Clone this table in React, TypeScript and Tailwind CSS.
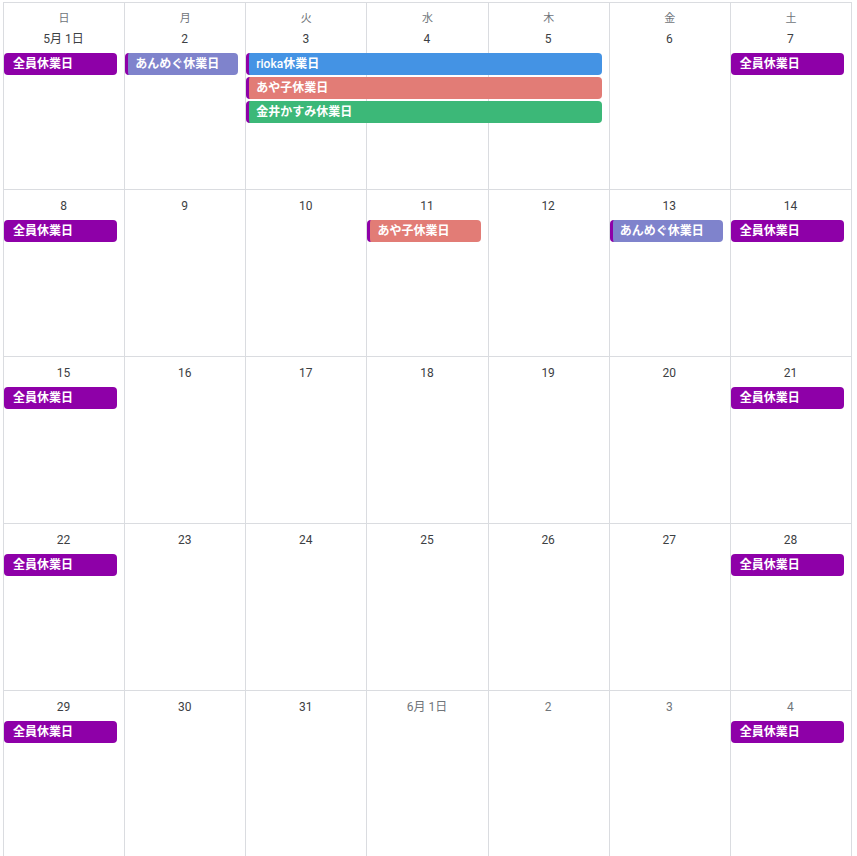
import React from "react";

type Ev = {
  col: number;
  span: number;
  row: number;
  label: string;
  color: string;
  stripe?: boolean;
};

const colStart = ["col-start-1", "col-start-2", "col-start-3", "col-start-4", "col-start-5", "col-start-6", "col-start-7"];
const colSpan: Record<number, string> = { 1: "col-span-1", 3: "col-span-3" };
const rowStart = ["row-start-2", "row-start-3", "row-start-4"];

const days = ["日", "月", "火", "水", "木", "金", "土"];

const ALL = "全員休業日";

const weeks: { dates: { label: string; muted?: boolean }[]; events: Ev[] }[] = [
  {
    dates: ["5月 1日", "2", "3", "4", "5", "6", "7"].map((label) => ({ label })),
    events: [
      { col: 1, span: 1, row: 0, label: ALL, color: "bg-[#8e00a8]" },
      { col: 2, span: 1, row: 0, label: "あんめぐ休業日", color: "bg-[#7f83cc]", stripe: true },
      { col: 3, span: 3, row: 0, label: "rioka休業日", color: "bg-[#4493e4]", stripe: true },
      { col: 3, span: 3, row: 1, label: "あや子休業日", color: "bg-[#e27c76]", stripe: true },
      { col: 3, span: 3, row: 2, label: "金井かすみ休業日", color: "bg-[#3cb878]", stripe: true },
      { col: 7, span: 1, row: 0, label: ALL, color: "bg-[#8e00a8]" },
    ],
  },
  {
    dates: ["8", "9", "10", "11", "12", "13", "14"].map((label) => ({ label })),
    events: [
      { col: 1, span: 1, row: 0, label: ALL, color: "bg-[#8e00a8]" },
      { col: 4, span: 1, row: 0, label: "あや子休業日", color: "bg-[#e27c76]", stripe: true },
      { col: 6, span: 1, row: 0, label: "あんめぐ休業日", color: "bg-[#7f83cc]", stripe: true },
      { col: 7, span: 1, row: 0, label: ALL, color: "bg-[#8e00a8]" },
    ],
  },
  {
    dates: ["15", "16", "17", "18", "19", "20", "21"].map((label) => ({ label })),
    events: [
      { col: 1, span: 1, row: 0, label: ALL, color: "bg-[#8e00a8]" },
      { col: 7, span: 1, row: 0, label: ALL, color: "bg-[#8e00a8]" },
    ],
  },
  {
    dates: ["22", "23", "24", "25", "26", "27", "28"].map((label) => ({ label })),
    events: [
      { col: 1, span: 1, row: 0, label: ALL, color: "bg-[#8e00a8]" },
      { col: 7, span: 1, row: 0, label: ALL, color: "bg-[#8e00a8]" },
    ],
  },
  {
    dates: [
      { label: "29" },
      { label: "30" },
      { label: "31" },
      { label: "6月 1日", muted: true },
      { label: "2", muted: true },
      { label: "3", muted: true },
      { label: "4", muted: true },
    ],
    events: [
      { col: 1, span: 1, row: 0, label: ALL, color: "bg-[#8e00a8]" },
      { col: 7, span: 1, row: 0, label: ALL, color: "bg-[#8e00a8]" },
    ],
  },
];

// latin part of a title reads lighter than the CJK part
function Title({ text }: { text: string }) {
  const m = text.match(/^([A-Za-z]+)(.*)$/);
  if (!m) return <>{text}</>;
  return (
    <>
      <span className="font-medium">{m[1]}</span>
      {m[2]}
    </>
  );
}

function EventChip({ ev }: { ev: Ev }) {
  return (
    <div
      className={`${colStart[ev.col - 1]} ${colSpan[ev.span]} ${rowStart[ev.row]} ml-[1px] mr-[7px] h-[22px] rounded-[4px] ${ev.color} ${
        ev.stripe ? "border-l-[3px] border-[#8e00a8] pl-[7px]" : "pl-[9px]"
      } text-[12px] leading-[22px] font-bold text-white whitespace-nowrap overflow-hidden`}
    >
      <Title text={ev.label} />
    </div>
  );
}

export default function App() {
  return (
    <div
      className="h-[856px] w-[857px] overflow-hidden bg-white"
      style={{ fontFamily: 'Roboto, "Noto Sans CJK JP", sans-serif' }}
    >
      <div className="mt-[2px] ml-[3px] w-[849px] border-t border-r border-[#dadce0]">
        <div className="grid grid-cols-7 h-[20px]">
          {days.map((d) => (
            <div
              key={d}
              className="border-l border-[#dadce0] pt-[10px] text-center text-[11px] leading-[12px] text-[#70757a]"
            >
              {d}
            </div>
          ))}
        </div>
        {weeks.map((w, wi) => (
          <div
            key={wi}
            className="grid grid-cols-7 grid-rows-[30px_24px_24px_24px_1fr] h-[167px] border-b border-[#dadce0]"
          >
            {w.dates.map((_, i) => (
              <div key={"bg" + i} className={`${colStart[i]} row-span-full border-l border-[#dadce0]`} />
            ))}
            {w.dates.map((d, i) => (
              <div
                key={"d" + i}
                className={`${colStart[i]} row-start-1 pt-[8px] text-center text-[12px] leading-[16px] ${
                  d.muted ? "text-[#70757a]" : "text-[#3c4043]"
                }`}
              >
                {d.label}
              </div>
            ))}
            {w.events.map((ev, i) => (
              <EventChip key={"e" + i} ev={ev} />
            ))}
          </div>
        ))}
      </div>
    </div>
  );
}
